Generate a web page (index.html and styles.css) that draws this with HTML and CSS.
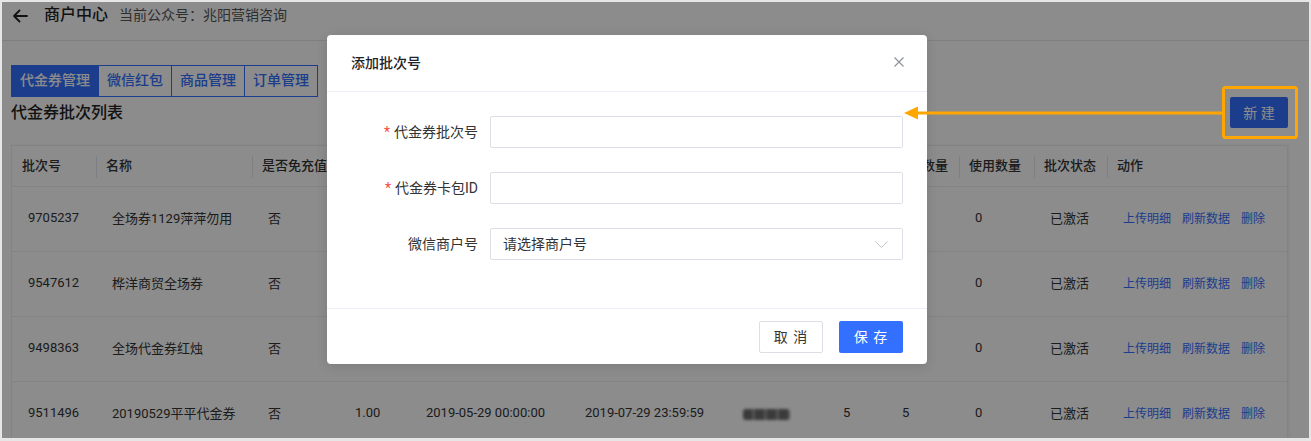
FILE: index.html
```html
<!DOCTYPE html>
<html lang="zh-CN">
<head>
<meta charset="utf-8">
<title>商户中心</title>
<link rel="stylesheet" href="styles.css">
</head>
<body>
<div class="screen">
  <div class="app">
    <header class="topbar">
      <svg class="back" width="16" height="16" viewBox="0 0 16 16"><path d="M15 8H2M7.5 2.5L2 8l5.5 5.5" fill="none" stroke="#222" stroke-width="1.8" stroke-linecap="round" stroke-linejoin="round"/></svg>
      <span class="app-title">商户中心</span>
      <span class="app-sub">当前公众号：兆阳营销咨询</span>
    </header>
    <main class="content">
      <nav class="tabs">
        <span class="tab active">代金券管理</span>
        <span class="tab">微信红包</span>
        <span class="tab">商品管理</span>
        <span class="tab">订单管理</span>
      </nav>
      <div class="list-head">
        <h2 class="list-title">代金券批次列表</h2>
        <button class="btn-new">新 建</button>
      </div>
      <div class="table-card">
        <table class="grid">
          <colgroup>
            <col class="w84"><col class="w156"><col class="w87"><col class="w71"><col class="w159"><col class="w158"><col class="w100"><col class="w59"><col class="w73"><col class="w75"><col class="w73"><col class="w180">
          </colgroup>
          <thead>
            <tr><th>批次号</th><th>名称</th><th>是否免充值</th><th>面额</th><th>开始时间</th><th>结束时间</th><th>商户号</th><th>库存</th><th>领取数量</th><th>使用数量</th><th>批次状态</th><th>动作</th></tr>
          </thead>
          <tbody>
            <tr><td>9705237</td><td>全场券1129萍萍勿用</td><td>否</td><td>1.00</td><td>2019-11-29 00:00:00</td><td>2020-01-29 23:59:59</td><td><span class="blur" aria-label="商户号已隐藏"></span></td><td>5</td><td>5</td><td>0</td><td>已激活</td><td><a class="act">上传明细</a><a class="act">刷新数据</a><a class="act">删除</a></td></tr>
            <tr><td>9547612</td><td>桦洋商贸全场券</td><td>否</td><td>1.00</td><td>2019-07-12 00:00:00</td><td>2019-09-12 23:59:59</td><td><span class="blur" aria-label="商户号已隐藏"></span></td><td>5</td><td>5</td><td>0</td><td>已激活</td><td><a class="act">上传明细</a><a class="act">刷新数据</a><a class="act">删除</a></td></tr>
            <tr><td>9498363</td><td>全场代金券红烛</td><td>否</td><td>1.00</td><td>2019-06-20 00:00:00</td><td>2019-08-20 23:59:59</td><td><span class="blur" aria-label="商户号已隐藏"></span></td><td>5</td><td>5</td><td>0</td><td>已激活</td><td><a class="act">上传明细</a><a class="act">刷新数据</a><a class="act">删除</a></td></tr>
            <tr><td>9511496</td><td>20190529平平代金券</td><td>否</td><td>1.00</td><td>2019-05-29 00:00:00</td><td>2019-07-29 23:59:59</td><td><span class="blur" aria-label="商户号已隐藏"></span></td><td>5</td><td>5</td><td>0</td><td>已激活</td><td><a class="act">上传明细</a><a class="act">刷新数据</a><a class="act">删除</a></td></tr>
          </tbody>
        </table>
      </div>
    </main>
  </div>

  <div class="mask"></div>

  <div class="dialog">
    <div class="dialog-header">
      <span class="dialog-title">添加批次号</span>
      <svg class="close" width="10" height="10" viewBox="0 0 10 10"><path d="M0.5 0.5L9.5 9.5M9.5 0.5L0.5 9.5" stroke="#8a8f99" stroke-width="1.1"/></svg>
    </div>
    <div class="dialog-body">
      <div class="form-row">
        <label class="form-label"><span class="req">*</span>代金券批次号</label>
        <div class="input"></div>
      </div>
      <div class="form-row">
        <label class="form-label"><span class="req">*</span>代金券卡包ID</label>
        <div class="input"></div>
      </div>
      <div class="form-row">
        <label class="form-label">微信商户号</label>
        <div class="input select">
          <span class="placeholder">请选择商户号</span>
          <svg width="13" height="7" viewBox="0 0 13 7"><path d="M0.5 0.5L6.5 6.5L12.5 0.5" fill="none" stroke="#c0c4cc" stroke-width="1"/></svg>
        </div>
      </div>
    </div>
    <div class="dialog-footer">
      <button class="btn btn-cancel">取 消</button>
      <button class="btn btn-save">保 存</button>
    </div>
  </div>

  <svg class="annotation" width="1307" height="436" viewBox="0 0 1307 436">
    <rect x="1221.5" y="85.5" width="73" height="50" rx="2" fill="none" stroke="#ffa600" stroke-width="3"/>
    <line x1="1220" y1="111" x2="912" y2="111" stroke="#ffa600" stroke-width="3"/>
    <polygon points="902,111 916,104.5 916,117.5" fill="#ffa600"/>
  </svg>
</div>
</body>
</html>
```

FILE: styles.css
```css
* { box-sizing: border-box; }

html, body {
  margin: 0;
  padding: 0;
}

body {
  background: #e6e6e6;
  width: 1311px;
  height: 441px;
  overflow: hidden;
  font-family: Roboto, "Noto Sans CJK SC", sans-serif;
  color: #333;
}

.screen {
  position: relative;
  margin: 2px 2px 0 2px;
  width: 1307px;
  height: 436px;
  overflow: hidden;
  background: #fff;
}

/* top bar */
.topbar {
  height: 39px;
  border-bottom: 1px solid #e8e8e8;
  display: flex;
  align-items: center;
  padding: 0 0 13px 10px;
  line-height: 26px;
}

.back { flex: none; margin-top: 2px; }

.app-title {
  margin-left: 16px;
  font-size: 16px;
  font-weight: 500;
  color: #1f1f1f;
}

.app-sub {
  margin-left: 11px;
  font-size: 14px;
  color: #555;
}

/* content */
.content {
  padding: 24px 21px 0 9px;
}

.tabs {
  display: flex;
}

.tab {
  height: 32px;
  line-height: 29px;
  padding: 0 8px;
  border: 1px solid #3370ff;
  color: #3370ff;
  font-size: 14px;
  font-weight: 500;
  background: #fff;
}

.tab + .tab { border-left: none; }

.tab.active {
  background: #3370ff;
  color: #fff;
}

.list-head {
  display: flex;
  justify-content: space-between;
  align-items: center;
  height: 31px;
}

.list-title {
  margin: 0;
  padding-bottom: 3px;
  font-size: 16px;
  font-weight: 500;
  color: #222;
}

.btn-new {
  width: 58px;
  height: 31px;
  border: none;
  border-radius: 2px;
  background: #3370ff;
  color: #fff;
  font-family: inherit;
  font-size: 14px;
  padding: 0 0 2px;
}

.table-card {
  margin-top: 17px;
  border: 1px solid #ebeef5;
  border-bottom: none;
  background: #fff;
  box-shadow: 1px 0 3px rgba(0, 0, 0, 0.06);
}

.grid {
  width: 100%;
  table-layout: fixed;
  border-collapse: separate;
  border-spacing: 0;
  font-size: 13px;
  color: #333;
}

.w84 { width: 84px; }
.w156 { width: 156px; }
.w87 { width: 87px; }
.w71 { width: 71px; }
.w159 { width: 159px; }
.w158 { width: 158px; }
.w100 { width: 100px; }
.w59 { width: 59px; }
.w73 { width: 73px; }
.w75 { width: 75px; }
.w180 { width: 180px; }

.grid th {
  height: 41px;
  padding: 0 0 3px 10px;
  text-align: left;
  font-weight: 500;
  color: #333;
  white-space: nowrap;
  overflow: hidden;
  border-bottom: 1px solid #ebeef5;
  background: #fff;
}

.grid th + th {
  background: linear-gradient(#e6e8ee, #e6e8ee) left 10px / 1px 22px no-repeat, #fff;
}

.grid td {
  height: 65px;
  padding: 0 0 4px 16px;
  white-space: nowrap;
  overflow: hidden;
  border-bottom: 1px solid #ebeef5;
}

.blur {
  display: inline-block;
  vertical-align: middle;
  width: 47px;
  height: 11px;
  margin-top: 2px;
  border-radius: 3px;
  background: repeating-linear-gradient(90deg, #6a6a6a 0 9px, #9a9a9a 9px 12px);
  filter: blur(1.8px);
}

.act {
  font-size: 12px;
  color: #3370ff;
  margin-right: 11px;
}

/* mask */
.mask {
  position: absolute;
  inset: 0;
  background: rgba(0, 0, 0, 0.45);
}

/* dialog */
.dialog {
  position: absolute;
  left: 325px;
  top: 33px;
  width: 600px;
  background: #fff;
  border-radius: 4px;
  box-shadow: 0 2px 12px rgba(0, 0, 0, 0.12);
}

.dialog-header {
  height: 57px;
  padding: 0 23px 2px 24px;
  display: flex;
  align-items: center;
  justify-content: space-between;
  border-bottom: 1px solid #ebeef5;
}

.dialog-title {
  font-size: 14px;
  font-weight: 500;
  color: #1f2329;
}

.dialog-body {
  padding: 24px 24px 48px;
  display: flex;
  flex-direction: column;
  gap: 24px;
}

.form-row {
  display: flex;
  align-items: center;
}

.form-label {
  flex: none;
  width: 139px;
  padding: 0 12px 2px 0;
  text-align: right;
  font-size: 14px;
  color: #333;
}

.req {
  color: #f54a45;
  margin-right: 4px;
}

.input {
  flex: 1;
  height: 32px;
  border: 1px solid #dcdfe6;
  border-radius: 2px;
}

.select {
  display: flex;
  align-items: center;
  justify-content: space-between;
  padding: 0 14px 0 12px;
}

.placeholder {
  font-size: 14px;
  color: #333;
  padding-bottom: 2px;
}

.dialog-footer {
  border-top: 1px solid #ebeef5;
  padding: 12px 24px 11px;
  display: flex;
  justify-content: flex-end;
  gap: 16px;
}

.btn {
  width: 64px;
  height: 32px;
  border-radius: 2px;
  font-family: inherit;
  font-size: 14px;
  padding: 0 0 2px;
  letter-spacing: 1px;
}

.btn-cancel {
  background: #fff;
  border: 1px solid #dcdfe6;
  color: #333;
}

.btn-save {
  background: #3370ff;
  border: none;
  color: #fff;
}

/* annotation overlay */
.annotation {
  position: absolute;
  left: 0;
  top: 0;
  pointer-events: none;
}
```
